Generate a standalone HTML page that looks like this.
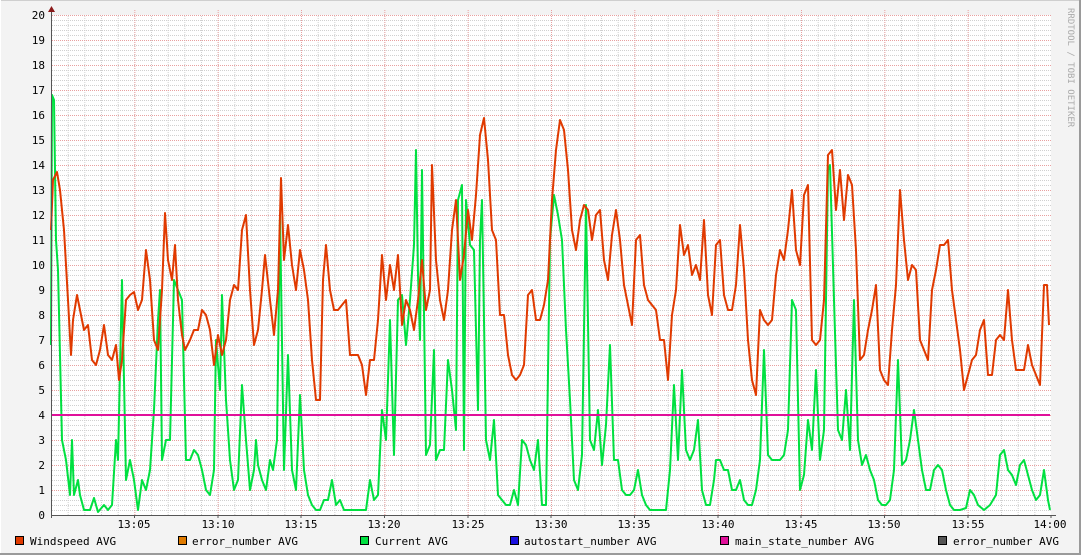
<!DOCTYPE html>
<html><head><meta charset="utf-8"><style>
html,body{margin:0;padding:0;background:#f3f3f3;}
svg{display:block;font-family:"DejaVu Sans Mono","Liberation Mono",monospace;}
</style></head><body>
<svg width="1081" height="555" viewBox="0 0 1081 555" xmlns="http://www.w3.org/2000/svg">
<defs>
<pattern id="hmin" x="0" y="15" width="1000" height="5" patternUnits="userSpaceOnUse"><line x1="0" y1="0.5" x2="1000" y2="0.5" stroke="#d0d0d0" stroke-width="1" stroke-dasharray="1,1"/></pattern>
<pattern id="vmin" x="51" y="0" width="16.667" height="600" patternUnits="userSpaceOnUse"><line x1="0.5" y1="0" x2="0.5" y2="600" stroke="#d0d0d0" stroke-width="1" stroke-dasharray="1,1"/></pattern>
<pattern id="hmaj" x="0" y="15" width="1000" height="25" patternUnits="userSpaceOnUse"><line x1="0" y1="0.5" x2="1000" y2="0.5" stroke="#e8a0a0" stroke-width="1" stroke-dasharray="1,1"/></pattern>
<pattern id="vmaj" x="51" y="0" width="83.333" height="600" patternUnits="userSpaceOnUse"><line x1="0.5" y1="0" x2="0.5" y2="600" stroke="#e8a0a0" stroke-width="1" stroke-dasharray="1,1"/></pattern>
</defs>
<rect x="0" y="0" width="1081" height="555" fill="#f3f3f3"/>
<line x1="0" y1="0.5" x2="1081" y2="0.5" stroke="#cfcfcf"/>
<line x1="0.5" y1="0" x2="0.5" y2="555" stroke="#ffffff"/>
<line x1="0" y1="554" x2="1081" y2="554" stroke="#9a9a9a" stroke-width="2"/>
<line x1="1080" y1="0" x2="1080" y2="555" stroke="#9a9a9a" stroke-width="2"/>
<rect x="51" y="15" width="1000" height="500" fill="#ffffff"/>
<rect x="51" y="15" width="1000" height="500" fill="url(#hmin)"/>
<rect x="51" y="15" width="1000" height="500" fill="url(#vmin)"/>
<rect x="51" y="15" width="1000" height="500" fill="url(#hmaj)"/>
<rect x="51" y="10" width="1000" height="505" fill="url(#vmaj)"/>
<g font-size="11" fill="#000" text-anchor="end">
<text x="45" y="19">20</text><text x="45" y="44">19</text><text x="45" y="69">18</text><text x="45" y="94">17</text><text x="45" y="119">16</text><text x="45" y="144">15</text><text x="45" y="169">14</text><text x="45" y="194">13</text><text x="45" y="219">12</text><text x="45" y="244">11</text><text x="45" y="269">10</text><text x="45" y="294">9</text><text x="45" y="319">8</text><text x="45" y="344">7</text><text x="45" y="369">6</text><text x="45" y="394">5</text><text x="45" y="419">4</text><text x="45" y="444">3</text><text x="45" y="469">2</text><text x="45" y="494">1</text><text x="45" y="519">0</text>
</g>
<g font-size="11" fill="#000" text-anchor="middle">
<text x="134" y="528">13:05</text><text x="218" y="528">13:10</text><text x="301" y="528">13:15</text><text x="384" y="528">13:20</text><text x="468" y="528">13:25</text><text x="551" y="528">13:30</text><text x="634" y="528">13:35</text><text x="718" y="528">13:40</text><text x="801" y="528">13:45</text><text x="884" y="528">13:50</text><text x="968" y="528">13:55</text><text x="1050" y="528">14:00</text>
</g>
<text x="1068" y="8" font-size="9" fill="#aaa" transform="rotate(90 1068 8)">RRDTOOL / TOBI OETIKER</text>
<polyline fill="none" stroke="#00e040" stroke-width="2" stroke-linejoin="round" points="51,345 52,95 54,100 56,240 58,270 62,440 66,460 70,495 72,440 74,495 78,480 80,495 84,510 90,510 94,498 98,512 104,505 108,510 112,505 116,440 118,460 122,280 126,480 130,460 134,480 138,510 142,480 146,490 150,470 154,410 158,320 160,290 162,460 166,440 170,440 174,280 178,290 182,300 186,460 190,460 194,450 198,455 202,470 206,490 210,495 214,470 216,340 220,390 222,295 226,400 230,460 234,490 238,480 242,385 246,440 250,490 254,470 256,440 258,465 262,480 266,490 270,460 273,470 277,440 280,215 284,470 288,355 292,470 296,490 300,395 304,470 308,495 312,505 316,510 320,510 324,500 328,500 332,480 336,505 340,500 344,510 350,510 360,510 366,510 370,480 374,500 378,495 382,410 386,440 390,320 394,455 398,300 402,295 406,345 410,300 414,245 416,150 418,275 420,340 422,170 426,455 430,445 434,350 436,460 440,450 444,450 448,360 452,390 456,430 458,200 462,185 464,450 466,200 470,245 474,250 478,410 480,240 482,200 486,440 490,460 494,420 498,495 502,500 506,505 510,505 514,490 518,505 522,440 526,445 530,460 534,470 538,440 542,505 546,505 550,240 554,195 558,215 562,240 566,330 570,400 574,480 578,490 582,455 586,205 590,440 594,450 598,410 602,465 606,425 610,345 614,460 618,460 622,490 626,495 630,495 634,490 638,470 642,495 646,505 650,510 660,510 666,510 670,470 674,385 678,460 682,370 686,450 690,460 694,450 698,420 702,490 706,505 710,505 714,480 716,460 720,460 724,470 728,470 732,490 736,490 740,480 744,500 748,505 752,505 756,490 760,460 764,350 768,455 772,460 776,460 780,460 784,455 788,430 792,300 796,310 800,490 804,475 808,420 812,450 816,370 820,460 824,430 828,170 830,165 834,300 838,430 842,440 846,390 850,450 854,300 858,440 862,465 866,455 870,470 874,480 878,500 882,505 886,505 890,500 894,470 898,360 902,465 906,460 910,440 914,410 918,440 922,470 926,490 930,490 934,470 938,465 942,470 946,490 950,505 954,510 960,510 966,508 970,490 974,495 978,505 984,510 990,505 996,495 1000,455 1004,450 1008,470 1012,475 1016,485 1020,465 1024,460 1028,475 1032,490 1036,500 1040,495 1044,470 1048,500 1050,510"/>
<polyline fill="none" stroke="#e03a00" stroke-width="2" stroke-linejoin="round" points="51,230 53,180 57,172 60,190 64,230 68,300 71,355 73,320 77,295 80,310 84,330 88,325 92,360 96,365 100,350 104,325 108,355 112,360 116,345 119,380 122,360 126,300 130,295 134,292 138,310 142,300 146,250 150,280 154,340 158,350 162,290 165,213 168,260 172,280 175,245 178,300 182,335 185,350 190,340 194,330 198,330 202,310 206,315 210,330 214,365 218,335 222,355 226,340 230,300 234,285 238,290 242,230 246,215 250,290 254,345 258,330 262,290 265,255 270,300 274,335 278,290 281,178 284,260 288,225 292,265 296,290 300,250 304,270 308,300 312,360 316,400 320,400 323,280 326,245 330,290 334,310 338,310 342,305 346,300 350,355 354,355 358,355 362,365 366,395 370,360 374,360 378,320 382,255 386,300 390,265 394,290 398,255 402,325 406,300 410,310 414,330 418,300 422,260 426,310 430,290 432,165 436,260 440,300 444,320 448,290 452,230 456,200 460,280 464,255 468,210 472,240 476,195 480,135 484,118 488,160 492,230 496,240 500,315 504,315 508,355 512,375 516,380 520,375 524,365 528,295 532,290 536,320 540,320 544,305 548,280 552,200 556,150 560,120 564,130 568,170 572,230 576,250 580,220 584,205 588,210 592,240 596,215 600,210 604,260 608,280 612,235 616,210 620,240 624,285 628,305 632,325 636,240 640,235 644,285 648,300 652,305 656,310 660,340 664,340 668,380 672,315 676,290 680,225 684,255 688,245 692,275 696,265 700,280 704,220 708,295 712,315 716,245 720,240 724,295 728,310 732,310 736,285 740,225 744,270 748,340 752,380 756,395 760,310 764,320 768,325 772,320 776,275 780,250 784,260 788,230 792,190 796,250 800,265 804,195 808,185 812,340 816,345 820,340 824,300 828,155 832,150 836,210 840,170 844,220 848,175 852,185 856,250 860,360 864,355 868,330 872,310 876,285 880,370 884,380 888,385 892,330 896,285 900,190 904,240 908,280 912,265 916,270 920,340 924,350 928,360 932,290 936,270 940,245 944,245 948,240 952,290 956,320 960,350 964,390 968,375 972,360 976,355 980,330 984,320 988,375 992,375 996,340 1000,335 1004,340 1008,290 1012,340 1016,370 1020,370 1024,370 1028,345 1032,365 1036,375 1040,385 1044,285 1047,285 1049,325"/>
<line x1="51" y1="415" x2="1050" y2="415" stroke="#e0109a" stroke-width="2"/>
<line x1="51" y1="515.5" x2="1056" y2="515.5" stroke="#555"/>
<line x1="51.5" y1="10" x2="51.5" y2="518" stroke="#555"/>
<g stroke="#555"><line x1="134.5" y1="515" x2="134.5" y2="518"/><line x1="218" y1="515" x2="218" y2="518"/><line x1="301" y1="515" x2="301" y2="518"/><line x1="384.5" y1="515" x2="384.5" y2="518"/><line x1="468" y1="515" x2="468" y2="518"/><line x1="551" y1="515" x2="551" y2="518"/><line x1="634.5" y1="515" x2="634.5" y2="518"/><line x1="718" y1="515" x2="718" y2="518"/><line x1="801" y1="515" x2="801" y2="518"/><line x1="884.5" y1="515" x2="884.5" y2="518"/><line x1="968" y1="515" x2="968" y2="518"/><line x1="1051" y1="515" x2="1051" y2="518"/></g>
<polygon points="48,12 55,12 51.5,6" fill="#8b1a1a"/>
<g stroke="#000" stroke-width="1">
<rect x="15.5" y="536.5" width="8" height="8" fill="#e03a00"/>
<rect x="178.5" y="536.5" width="8" height="8" fill="#e07b00"/>
<rect x="360.5" y="536.5" width="8" height="8" fill="#00e040"/>
<rect x="510.5" y="536.5" width="8" height="8" fill="#1a10e0"/>
<rect x="720.5" y="536.5" width="8" height="8" fill="#e0109a"/>
<rect x="938.5" y="536.5" width="8" height="8" fill="#555555"/>
</g>
<g font-size="11" fill="#000">
<text x="30" y="545">Windspeed AVG</text>
<text x="192" y="545">error_number AVG</text>
<text x="375" y="545">Current AVG</text>
<text x="524" y="545">autostart_number AVG</text>
<text x="735" y="545">main_state_number AVG</text>
<text x="953" y="545">error_number AVG</text>
</g>
</svg>
</body></html>
